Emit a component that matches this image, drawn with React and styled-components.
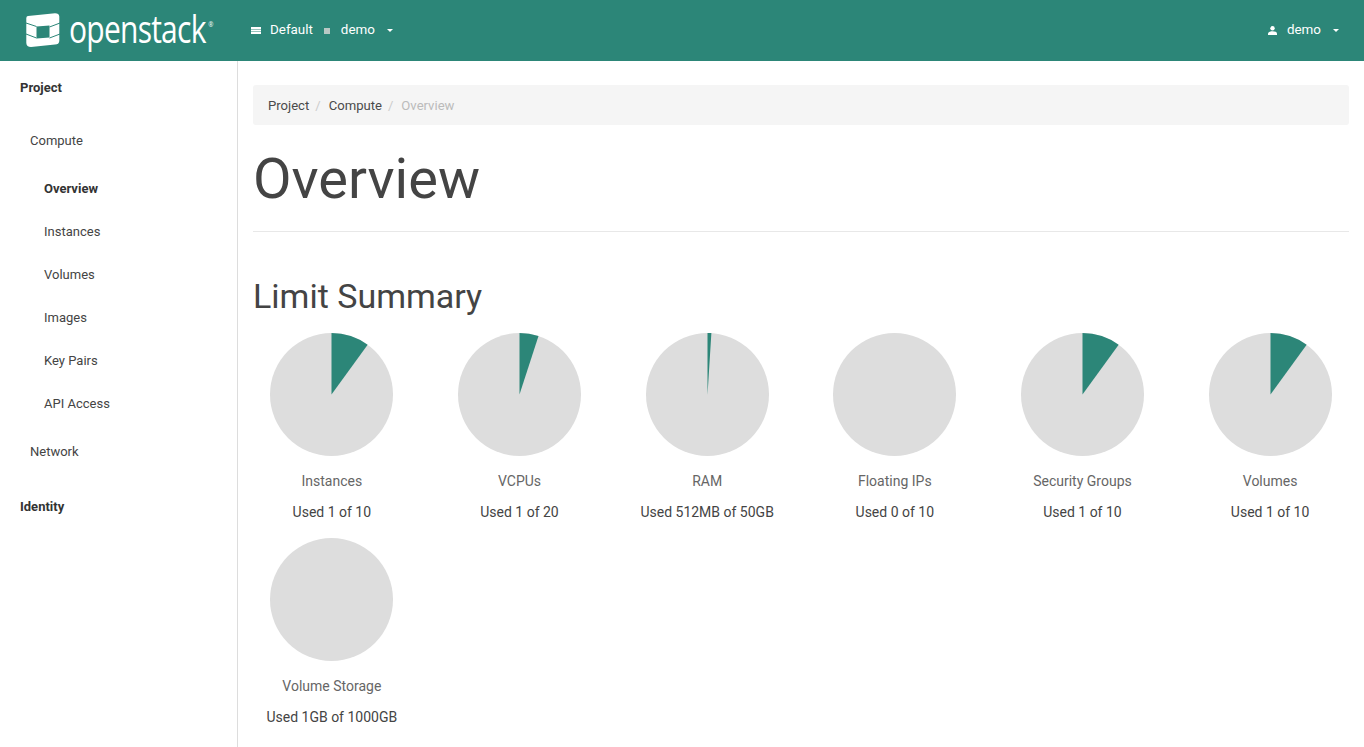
import React from 'react';
import styled, { createGlobalStyle } from 'styled-components';

const GlobalStyle = createGlobalStyle`
  html, body {
    margin: 0;
    padding: 0;
    height: 100%;
    overflow: hidden;
    background: #fff;
    font-family: Roboto, "Liberation Sans", sans-serif;
    font-size: 13px;
    color: #333;
  }
  #root {
    height: 100%;
  }
`;

const Page = styled.div`
  height: 747px;
  display: flex;
  flex-direction: column;
`;

const Navbar = styled.header`
  height: 61px;
  flex: none;
  background: #2c8678;
  color: #fff;
  display: flex;
  align-items: center;
  padding-left: 26px;
  padding-right: 25px;
`;

const Brand = styled.div`
  width: 225px;
  display: flex;
  align-items: center;
  gap: 9px;
`;

const Wordmark = styled.span`
  font-family: "Open Sans", sans-serif;
  font-weight: 400;
  font-size: 39px;
  line-height: 1;
  letter-spacing: -1px;
  display: inline-block;
  transform: scaleX(0.77);
  transform-origin: left center;
  width: 134px;
  white-space: nowrap;
  margin-top: -7px;
  position: relative;
`;

const Registered = styled.span`
  position: absolute;
  left: 181px;
  top: 12px;
  font-size: 8px;
  font-weight: 400;
  line-height: 1;
  letter-spacing: 0;
`;

const NavText = styled.span`
  font-size: 13.4px;
  font-weight: 400;
  margin-top: -3px;
  margin-left: ${(p) => p.$left || 0}px;
`;

const Caret = styled.span`
  width: 0;
  height: 0;
  margin-left: ${(p) => p.$left || 0}px;
  border-left: 3px solid transparent;
  border-right: 3px solid transparent;
  border-top: 3px solid #fff;
`;

const Square = styled.span`
  width: 6px;
  height: 6px;
  background: #b8c8c4;
  margin-left: 11px;
`;

const Spacer = styled.div`
  flex: 1;
`;

const Body = styled.div`
  flex: 1;
  display: flex;
  min-height: 0;
`;

const Sidebar = styled.nav`
  width: 237px;
  flex: none;
  border-right: 1px solid #ddd;
  padding-top: 6px;
`;

const SideLink = styled.div`
  font-size: 13px;
  line-height: 20px;
  color: ${(p) => (p.$strong ? '#333' : '#444')};
  font-weight: ${(p) => (p.$strong ? 700 : 400)};
  padding-left: ${(p) => p.$indent}px;
  padding-top: ${(p) => p.$top}px;
  padding-bottom: ${(p) => p.$bottom}px;
`;

const Main = styled.main`
  flex: 1;
  min-width: 0;
  padding: 24px 15px 0;
`;

const Breadcrumb = styled.ol`
  list-style: none;
  margin: 0;
  padding: 2px 15px 0;
  box-sizing: border-box;
  height: 40px;
  background: #f5f5f5;
  border-radius: 3px;
  display: flex;
  align-items: center;
  font-size: 13.1px;
  line-height: 20px;
`;

const Crumb = styled.li`
  color: ${(p) => (p.$active ? '#bbb' : '#4a4a4a')};

  &:not(:first-child)::before {
    content: '/';
    color: #ccc;
    padding: 0 8px 0 6px;
  }
`;

const PageHeader = styled.div`
  height: 106px;
  border-bottom: 1px solid #e8e8e8;
`;

const Title = styled.h1`
  margin: 0;
  padding-top: 24px;
  font-size: 56px;
  line-height: 60px;
  font-weight: 400;
  color: #444;
`;

const Section = styled.h2`
  margin: 44px 0 0;
  font-size: 34px;
  line-height: 40px;
  font-weight: 400;
  color: #444;
`;

const PieRow = styled.div`
  margin: 17px -15px 0;
  display: flex;
  flex-wrap: wrap;
`;

const PieCell = styled.div`
  width: 16.6667%;
  height: 205px;
  text-align: center;
`;

const PieSvg = styled.svg`
  display: block;
  margin: 0 auto;
`;

const PieLabel = styled.div`
  margin-top: 15px;
  line-height: 20px;
  font-size: 14px;
  color: #666;
`;

const PieUsed = styled.div`
  margin-top: 11px;
  line-height: 20px;
  font-size: 14px;
  color: #444;
`;

const Pie = ({ ratio }) => {
  const a = ratio * 2 * Math.PI;
  const x = 61.5 + 61.5 * Math.sin(a);
  const y = 61.5 - 61.5 * Math.cos(a);
  return (
    <PieSvg width="123" height="123" viewBox="0 0 123 123">
      <circle cx="61.5" cy="61.5" r="61.5" fill="#ddd" />
      {ratio > 0 && <path d={`M61.5 61.5 L61.5 0 A61.5 61.5 0 0 1 ${x} ${y} Z`} fill="#2c8678" />}
    </PieSvg>
  );
};

const Logo = () => (
  <svg width="34" height="35" viewBox="0 0 34 35">
    <path
      fill="#fff"
      d="M2 3 L29 .3 Q33 .3 33.3 3.5 L33.3 28 Q33 31.5 29 31.5 L5 34 Q.5 34 .3 30 L.3 5 Q.5 3.2 2 3 Z"
    />
    <path fill="#2c8678" d="M10.5 13.5 L23.5 12.5 L23.5 24.5 L10.5 25.5 Z" />
    <path
      fill="none"
      stroke="#2c8678"
      strokeWidth="1"
      d="M0 10 L10.5 13.5 M0 21 L10.5 25 M23.5 14 L34 10 M23.5 25 L34 21"
    />
  </svg>
);

const ListIcon = () => (
  <svg width="10" height="7" viewBox="0 0 10 7" fill="#fff">
    <path d="M0 0h10v2H0zM0 2.5h10v2H0zM0 5h10v2H0z" />
  </svg>
);

const UserIcon = () => (
  <svg width="9" height="9" viewBox="0 0 9 9" fill="#fff">
    <circle cx="4.5" cy="2.3" r="2.2" />
    <path d="M0 9V7.6C0 6 2 5.2 4.5 5.2S9 6 9 7.6V9z" />
  </svg>
);

const pies = [
  { label: 'Instances', used: 'Used 1 of 10', ratio: 0.1 },
  { label: 'VCPUs', used: 'Used 1 of 20', ratio: 0.05 },
  { label: 'RAM', used: 'Used 512MB of 50GB', ratio: 0.01 },
  { label: 'Floating IPs', used: 'Used 0 of 10', ratio: 0 },
  { label: 'Security Groups', used: 'Used 1 of 10', ratio: 0.1 },
  { label: 'Volumes', used: 'Used 1 of 10', ratio: 0.1 },
  { label: 'Volume Storage', used: 'Used 1GB of 1000GB', ratio: 0 },
];

const links = [
  { text: 'Project', indent: 20, top: 11, bottom: 23, strong: true },
  { text: 'Compute', indent: 30, top: 10, bottom: 18 },
  { text: 'Overview', indent: 44, top: 10, bottom: 13, strong: true },
  { text: 'Instances', indent: 44, top: 10, bottom: 13 },
  { text: 'Volumes', indent: 44, top: 10, bottom: 13 },
  { text: 'Images', indent: 44, top: 10, bottom: 13 },
  { text: 'Key Pairs', indent: 44, top: 10, bottom: 13 },
  { text: 'API Access', indent: 44, top: 10, bottom: 18 },
  { text: 'Network', indent: 30, top: 10, bottom: 25 },
  { text: 'Identity', indent: 20, top: 10, bottom: 10, strong: true },
];

export default function App() {
  return (
    <Page>
      <GlobalStyle />
      <Navbar>
        <Brand>
          <Logo />
          <Wordmark>
            openstack<Registered>®</Registered>
          </Wordmark>
        </Brand>
        <ListIcon />
        <NavText $left={9}>Default</NavText>
        <Square />
        <NavText $left={11}>demo</NavText>
        <Caret $left={12} />
        <Spacer />
        <UserIcon />
        <NavText $left={10}>demo</NavText>
        <Caret $left={12} />
      </Navbar>
      <Body>
        <Sidebar>
          {links.map((l) => (
            <SideLink key={l.text} $indent={l.indent} $top={l.top} $bottom={l.bottom} $strong={l.strong}>
              {l.text}
            </SideLink>
          ))}
        </Sidebar>
        <Main>
          <Breadcrumb>
            <Crumb>Project</Crumb>
            <Crumb>Compute</Crumb>
            <Crumb $active>Overview</Crumb>
          </Breadcrumb>
          <PageHeader>
            <Title>Overview</Title>
          </PageHeader>
          <Section>Limit Summary</Section>
          <PieRow>
            {pies.map((p) => (
              <PieCell key={p.label}>
                <Pie ratio={p.ratio} />
                <PieLabel>{p.label}</PieLabel>
                <PieUsed>{p.used}</PieUsed>
              </PieCell>
            ))}
          </PieRow>
        </Main>
      </Body>
    </Page>
  );
}
